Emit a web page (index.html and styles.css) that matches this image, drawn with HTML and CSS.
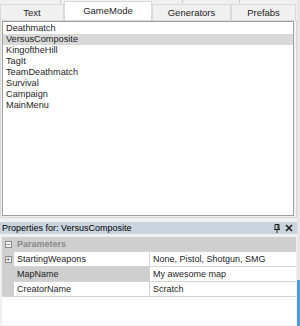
FILE: index.html
```html
<!DOCTYPE html>
<html lang="en">
<head>
    <meta charset="UTF-8">
    <title>Level Editor - GameMode</title>
    <link rel="stylesheet" href="styles.css">
</head>
<body>
    <div class="window">
        <div class="tabs-back">
            <span class="back-tab w1"></span>
            <span class="back-tab w2"></span>
            <span class="back-tab w3"></span>
        </div>
        <div class="tabs">
            <div class="tab t-text">Text</div>
            <div class="tab t-mode active">GameMode</div>
            <div class="tab t-gen">Generators</div>
            <div class="tab t-pre">Prefabs</div>
        </div>

        <div class="page">
            <ul class="list">
                <li>Deathmatch</li>
                <li class="selected">VersusComposite</li>
                <li>KingoftheHill</li>
                <li>TagIt</li>
                <li>TeamDeathmatch</li>
                <li>Survival</li>
                <li>Campaign</li>
                <li>MainMenu</li>
            </ul>
        </div>

        <div class="props-header">
            <span>Properties for: VersusComposite</span>
            <span class="header-icons">
                <svg width="8" height="9" viewBox="0 0 8 9">
                    <path d="M2 0.5h4v5h-4z M1 5.5h6 M4 5.5v3.5" fill="none" stroke="#1e1e1e" stroke-width="1"/>
                    <path d="M5 1v4" stroke="#1e1e1e" stroke-width="1"/>
                </svg>
                <svg width="8" height="8" viewBox="0 0 8 8">
                    <path d="M1 1l6 6M7 1l-6 6" stroke="#1e1e1e" stroke-width="1.6"/>
                </svg>
            </span>
        </div>

        <div class="grid">
            <div class="cat">
                <span class="margin"><span class="box">&minus;</span></span>
                <span class="cat-name">Parameters</span>
            </div>
            <div class="row">
                <span class="margin"><span class="box">+</span></span>
                <span class="name">StartingWeapons</span>
                <span class="value">None, Pistol, Shotgun, SMG</span>
            </div>
            <div class="row">
                <span class="margin"></span>
                <span class="name picked">MapName</span>
                <span class="value">My awesome map</span>
            </div>
            <div class="row">
                <span class="margin"></span>
                <span class="name">CreatorName</span>
                <span class="value">Scratch</span>
            </div>
        </div>
        <div class="edge"></div>
    </div>
</body>
</html>
```

FILE: styles.css
```css
body {
    margin: 0;
    background: #f0f0f0;
    font-family: "Liberation Sans", Arial, sans-serif;
    font-size: 9px;
    color: #1e1e1e;
}
.window {
    width: 300px;
    height: 326px;
    overflow: hidden;
    position: relative;
}
.tabs-back {
    height: 3px;
    display: flex;
    width: 297px;
}
.back-tab {
    border-right: 1px solid #c8c8c8;
    background: #f0f0f0;
}
.back-tab.w1 { width: 60px; }
.back-tab.w2 { width: 121px; }
.back-tab.w3 { width: 56px; }
.tabs {
    display: flex;
    height: 17px;
    align-items: flex-end;
    width: 296px;
}
.tab {
    height: 16px;
    line-height: 16px;
    text-align: center;
    background: #f0f0f0;
    border: 1px solid #d9d9d9;
    border-bottom: none;
    box-sizing: border-box;
    font-size: 9.5px;
}
.t-text { width: 64px; }
.t-mode { width: 88px; }
.t-gen { width: 79px; }
.t-pre { width: 65px; }
.tab.active {
    background: #fff;
    height: 19px;
    line-height: 18px;
}
.page {
    width: 297px;
    height: 198px;
    box-sizing: border-box;
    border: 1px solid #d9d9d9;
    padding: 0 2px 2px 1px;
    background: #f0f0f0;
}
.list {
    list-style: none;
    margin: 0;
    padding: 1px 0 0 0;
    height: 195px;
    box-sizing: border-box;
    border: 1px solid #a0a0a0;
    background: #fff;
}
.list li {
    height: 11px;
    line-height: 11px;
    padding-left: 3px;
    font-size: 9.2px;
}
.list li.selected {
    background: #d9d9d9;
}
.props-header {
    margin-top: 4px;
    width: 297px;
    height: 12px;
    line-height: 12px;
    background: #c9d4df;
    padding-left: 2px;
    box-sizing: border-box;
    display: flex;
    justify-content: space-between;
    align-items: center;
    font-size: 9px;
    color: #000;
}
.header-icons {
    display: flex;
    gap: 4px;
    align-items: center;
    padding-right: 4px;
}
.header-icons svg {
    display: block;
}
.grid {
    margin: 3px 0 0 2px;
    width: 294px;
    height: 88px;
    background: #fff;
}
.cat, .row {
    display: flex;
    height: 15px;
    line-height: 15px;
    box-sizing: border-box;
    border-bottom: 1px solid #d4d4d4;
}
.cat {
    background: #cfcfcf;
}
.margin {
    width: 12px;
    flex: none;
    background: #cfcfcf;
    display: flex;
    align-items: center;
    justify-content: center;
}
.box {
    width: 7px;
    height: 7px;
    box-sizing: border-box;
    border: 1px solid #8a8a8a;
    background: #f4f4f4;
    font-size: 7px;
    line-height: 5px;
    text-align: center;
    color: #333;
}
.cat-name {
    padding-left: 3px;
    font-weight: bold;
    color: #8a8a8a;
}
.name {
    width: 136px;
    flex: none;
    padding-left: 3px;
    box-sizing: border-box;
    border-right: 1px solid #d4d4d4;
}
.name.picked {
    background: #cfcfcf;
}
.value {
    padding-left: 3px;
}
.edge {
    position: absolute;
    right: 0;
    top: 0;
    width: 3px;
    height: 326px;
    background: linear-gradient(#e6e6e6 0 86%, #4a9fd0 86%);
}
```
